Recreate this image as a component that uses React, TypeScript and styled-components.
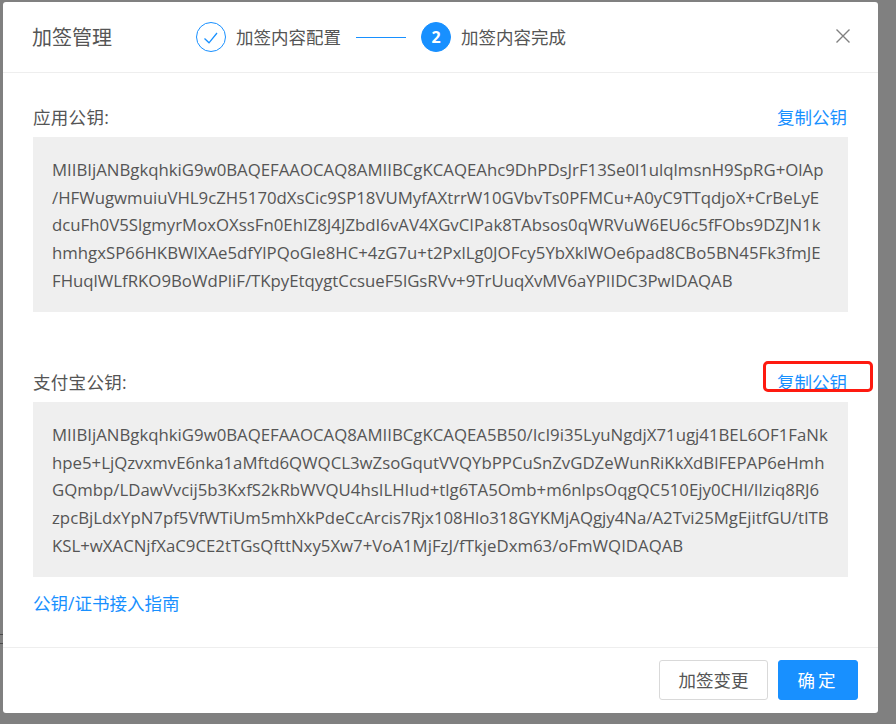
import React from 'react';
import styled, { createGlobalStyle } from 'styled-components';

const GlobalStyle = createGlobalStyle`
  html, body {
    margin: 0;
    padding: 0;
    background: #808080;
  }
  body {
    font-family: "Open Sans", "Noto Sans CJK SC", sans-serif;
    color: #555;
  }
`;

const Backdrop = styled.div`
  position: relative;
  width: 896px;
  height: 724px;
  box-sizing: border-box;
  padding: 2px 18px 11px 3px;
  background: #808080;
  overflow: hidden;
`;
// bits of the page underneath that show at the left edge
const PageLine = styled.div<{ $top: number }>`
  position: absolute;
  left: 0;
  top: ${p => p.$top}px;
  width: 3px;
  height: 1px;
  background: #4a4a4a;
`;
const Modal = styled.div`
  position: relative;
  display: flex;
  flex-direction: column;
  height: 100%;
  background: #fff;
  border-radius: 3px;
`;
const Header = styled.div`
  display: flex;
  align-items: center;
  height: 70px;
  flex: none;
  padding: 0 27px 0 29px;
  border-bottom: 1px solid #eee;
`;
const Title = styled.div`
  width: 164px;
  padding-top: 2px;
  font-size: 20px;
  line-height: 28px;
  color: #555;
`;
const Steps = styled.div`
  display: flex;
  align-items: center;
  flex: 1;
`;
const StepCircle = styled.div<{ $active?: boolean }>`
  display: flex;
  align-items: center;
  justify-content: center;
  width: 30px;
  height: 30px;
  box-sizing: border-box;
  border: 1px solid #1890ff;
  border-radius: 50%;
  background: ${p => (p.$active ? '#1890ff' : '#fff')};
  color: #fff;
  font-size: 16px;
  font-weight: 700;
`;
const StepText = styled.div`
  margin-left: 10px;
  font-size: 17.5px;
  line-height: 28px;
  color: #555;
`;
const StepLine = styled.div`
  width: 50px;
  height: 1px;
  margin: 0 15px;
  background: #1890ff;
`;
const CloseButton = styled.svg`
  width: 16px;
  height: 16px;
  flex: none;
  margin-top: -2px;
`;
const Body = styled.div`
  flex: 1;
  padding: 29px 30px 0;
`;
const Section = styled.div`
  margin-bottom: 55px;
`;
const LabelRow = styled.div`
  display: flex;
  align-items: center;
  justify-content: space-between;
  box-sizing: border-box;
  height: 35px;
  padding: 0 1px 6px 0;
`;
const Label = styled.div`
  font-size: 17.5px;
  line-height: 30px;
  letter-spacing: 0.3px;
  color: #555;
`;
const LinkText = styled.a`
  font-size: 17.5px;
  line-height: 30px;
  color: #1890ff;
  text-decoration: none;
`;
const KeyBox = styled.div`
  box-sizing: border-box;
  height: 175px;
  padding: 19px 19px 0;
  background: #efefef;
  font-size: 16.8px;
  font-weight: 400;
  line-height: 27.7px;
  color: #555;
  white-space: nowrap;
  overflow: hidden;
`;
const GuideRow = styled.div`
  margin-top: -44px;
  line-height: 30px;
`;
const Footer = styled.div`
  display: flex;
  justify-content: flex-end;
  align-items: center;
  flex: none;
  gap: 10px;
  box-sizing: border-box;
  height: 66px;
  padding: 0 20px 2px 0;
  border-top: 1px solid #eee;
`;
const Button = styled.button<{ $primary?: boolean }>`
  height: 40px;
  width: ${p => (p.$primary ? '80px' : '109px')};
  box-sizing: border-box;
  border: 1px solid ${p => (p.$primary ? '#1890ff' : '#d9d9d9')};
  border-radius: 3px;
  background: ${p => (p.$primary ? '#1890ff' : '#fff')};
  color: ${p => (p.$primary ? '#fff' : '#555')};
  font-family: inherit;
  font-size: 17.5px;
  letter-spacing: ${p => (p.$primary ? '3px' : '0')};
  padding: 0;
`;
const Annotation = styled.div`
  position: absolute;
  left: 760px;
  top: 359px;
  width: 110px;
  height: 31px;
  box-sizing: border-box;
  border: 3px solid #fe1a10;
  border-radius: 5px;
`;

const appKey = [
  'MIIBIjANBgkqhkiG9w0BAQEFAAOCAQ8AMIIBCgKCAQEAhc9DhPDsJrF13Se0l1ulqlmsnH9SpRG+OlAp',
  '/HFWugwmuiuVHL9cZH5170dXsCic9SP18VUMyfAXtrrW10GVbvTs0PFMCu+A0yC9TTqdjoX+CrBeLyE',
  'dcuFh0V5SlgmyrMoxOXssFn0EhIZ8J4JZbdI6vAV4XGvCIPak8TAbsos0qWRVuW6EU6c5fFObs9DZJN1k',
  'hmhgxSP66HKBWlXAe5dfYlPQoGle8HC+4zG7u+t2PxlLg0JOFcy5YbXklWOe6pad8CBo5BN45Fk3fmJE',
  'FHuqlWLfRKO9BoWdPliF/TKpyEtqygtCcsueF5lGsRVv+9TrUuqXvMV6aYPIIDC3PwIDAQAB',
];
const alipayKey = [
  'MIIBIjANBgkqhkiG9w0BAQEFAAOCAQ8AMIIBCgKCAQEA5B50/IcI9i35LyuNgdjX71ugj41BEL6OF1FaNk',
  'hpe5+LjQzvxmvE6nka1aMftd6QWQCL3wZsoGqutVVQYbPPCuSnZvGDZeWunRiKkXdBlFEPAP6eHmh',
  'GQmbp/LDawVvcij5b3KxfS2kRbWVQU4hsILHIud+tlg6TA5Omb+m6nlpsOqgQC510Ejy0CHl/Ilziq8RJ6',
  'zpcBjLdxYpN7pf5VfWTiUm5mhXkPdeCcArcis7Rjx108Hlo318GYKMjAQgjy4Na/A2Tvi25MgEjitfGU/tITB',
  'KSL+wXACNjfXaC9CE2tTGsQfttNxy5Xw7+VoA1MjFzJ/fTkjeDxm63/oFmWQIDAQAB',
];

const KeySection = ({ label, lines }: { label: string; lines: string[] }) => (
  <Section>
    <LabelRow>
      <Label>{label}</Label>
      <LinkText>复制公钥</LinkText>
    </LabelRow>
    <KeyBox>
      {lines.map(line => (
        <div key={line}>{line}</div>
      ))}
    </KeyBox>
  </Section>
);

export default function App() {
  return (
    <Backdrop>
      <GlobalStyle />
      <PageLine $top={634} />
      <PageLine $top={643} />
      <Modal>
        <Header>
          <Title>加签管理</Title>
          <Steps>
            <StepCircle>
              <svg width="16" height="16" viewBox="0 0 16 16" fill="none">
                <path d="M1.5 9.5 L6 13.8 L14 4" stroke="#1890ff" strokeWidth="1.3" />
              </svg>
            </StepCircle>
            <StepText>加签内容配置</StepText>
            <StepLine />
            <StepCircle $active>2</StepCircle>
            <StepText>加签内容完成</StepText>
          </Steps>
          <CloseButton viewBox="0 0 16 16">
            <path d="M1.5 1.5 L14.5 14.5 M14.5 1.5 L1.5 14.5" stroke="#808080" strokeWidth="1.4" fill="none" />
          </CloseButton>
        </Header>
        <Body>
          <KeySection label="应用公钥:" lines={appKey} />
          <KeySection label="支付宝公钥:" lines={alipayKey} />
          <GuideRow>
            <LinkText>公钥/证书接入指南</LinkText>
          </GuideRow>
        </Body>
        <Footer>
          <Button>加签变更</Button>
          <Button $primary>确定</Button>
        </Footer>
        <Annotation />
      </Modal>
    </Backdrop>
  );
}
